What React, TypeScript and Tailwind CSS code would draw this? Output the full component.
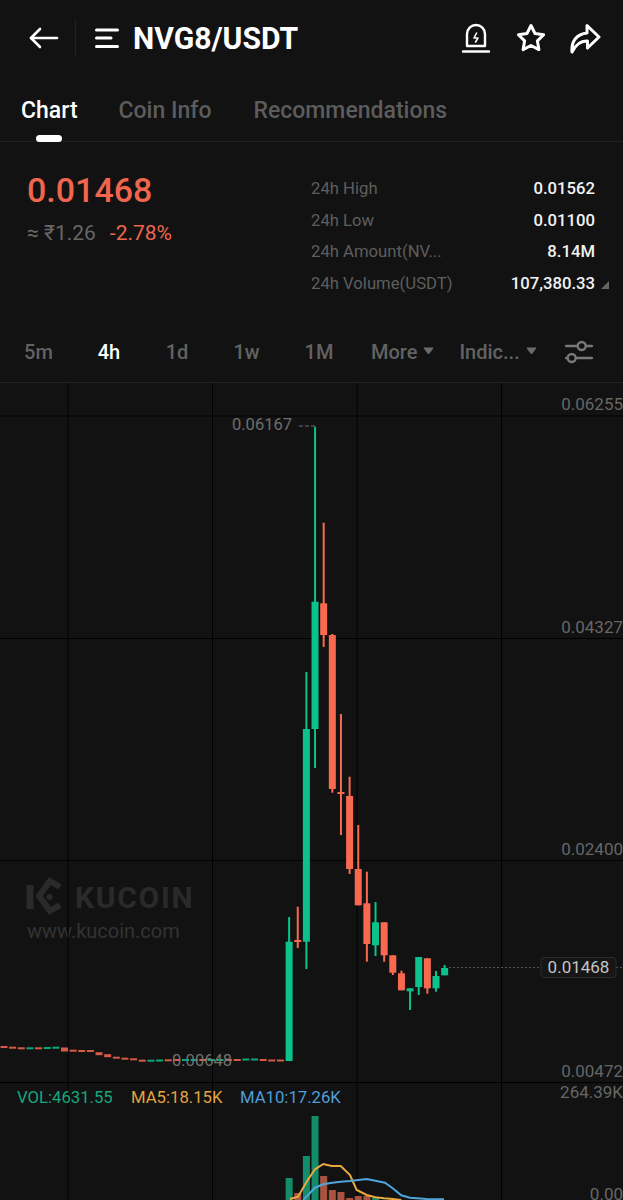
const UP = "#0cc28c";
const DOWN = "#f8694f";
const UP_VOL = "#128c69";
const DOWN_VOL = "#a9523f";
const xAt = (i: number) => 4 + 8.64 * i;

// Flat stretch of the market before the breakout: [index, y, rising, thickness]
const flat: [number, number, boolean, number][] = [
  [0, 1047, false, 2], [1, 1047.7, false, 2], [2, 1048.3, false, 2], [3, 1048.3, true, 2],
  [4, 1048.3, false, 2], [5, 1048, true, 2], [6, 1047.7, true, 2], [7, 1049.5, false, 4],
  [8, 1050.7, false, 2], [9, 1051, false, 2], [10, 1051, false, 2], [11, 1053.7, false, 3],
  [12, 1055.7, false, 3], [13, 1057.7, false, 2], [14, 1058.7, false, 2], [15, 1059.3, false, 2],
  [16, 1060.7, false, 2], [17, 1060.7, true, 2], [18, 1060.5, true, 2], [19, 1060.3, false, 2],
  [20, 1060, false, 2], [21, 1060, true, 2], [22, 1060, true, 2], [23, 1060, false, 2],
  [24, 1060, true, 2], [25, 1060, true, 2], [26, 1060, false, 2], [27, 1060, false, 2],
  [28, 1059.5, true, 2], [29, 1059.5, true, 2], [30, 1060, false, 2], [31, 1060.5, false, 2],
  [32, 1060.5, false, 2],
];

// Breakout candles: [index, bodyTop, bodyBottom, wickTop, wickBottom, rising]
const candles: [number, number, number, number, number, boolean][] = [
  [33, 941.7, 1061, 917, 1061, true],
  [34, 940, 942, 906.7, 948, false],
  [35, 729, 941.7, 672, 969, true],
  [36, 601.7, 729, 426.7, 768, true],
  [37, 603.3, 635, 522.7, 647, false],
  [38, 635, 789, 634, 792.7, false],
  [39, 792, 794, 714, 835, false],
  [40, 796, 869, 776.7, 874, false],
  [41, 869, 905.3, 825, 905.3, false],
  [42, 903.3, 944, 871.7, 961.7, false],
  [43, 922.3, 945.3, 902, 956, true],
  [44, 922.3, 955.3, 922.3, 961.7, false],
  [45, 955.3, 972.7, 955.3, 975, false],
  [46, 973.3, 990.3, 970.7, 990.3, false],
  [47, 988.3, 991.3, 988.3, 1010, true],
  [48, 957, 987, 957, 995, true],
  [49, 958.3, 988.3, 958.3, 993.7, false],
  [50, 976, 988.3, 971, 991.7, true],
  [51, 968, 975.3, 965, 975.3, true],
];

// Volume bars: [index, top, rising]
const volumes: [number, number, boolean][] = [
  [33, 1178, true], [34, 1193, false], [35, 1156, true], [36, 1116, true],
  [37, 1176, false], [38, 1190, false], [39, 1192, false], [40, 1198, false],
  [41, 1196, false], [42, 1196, false], [43, 1198, true],
];

const ma5 = "290,1199 298,1196.7 306.7,1181.7 315,1169.3 323.3,1164 331.7,1166 340.7,1166 350,1175 356.7,1190 366.7,1195 375.3,1197.3 384,1198.3 392.7,1199 401.3,1200";
const ma10 = "303.3,1200 315,1187.7 323.3,1184.3 332.3,1182.7 340.7,1181.7 350,1181 366.7,1179 375.3,1180.7 385,1182.7 392.7,1188.3 401.3,1195.3 410,1197.7 426.7,1199 444,1199.3";

function ChartCanvas() {
  return (
    <svg viewBox="0 383 623 817" className="block h-[817px] w-[623px]" style={{ fontFamily: "Roboto, sans-serif" }}>
      {/* watermark */}
      <g fill="none" stroke="#2a2a2a" strokeWidth="6">
        <path d="M30 885V909" strokeWidth="7" />
        <path d="M60 887L50 881L39 896L50 911L60 905" />
      </g>
      <circle cx="49.5" cy="897" r="3" fill="#2a2a2a" />
      <text x="75" y="908" fontSize="30" fontWeight="700" fill="#2a2a2a" letterSpacing="1.7">KUCOIN</text>
      <text x="27" y="938" fontSize="20" fill="#333333">www.kucoin.com</text>

      {/* grid */}
      <g stroke="#000000" strokeWidth="1">
        {[68, 212.5, 357, 501.5].map((x) => <line key={x} x1={x} x2={x} y1={383} y2={1200} />)}
        {[416, 638.5, 860.5, 1082.5].map((y) => <line key={y} x1={0} x2={623} y1={y} y2={y} />)}
      </g>

      {/* price candles */}
      {flat.map(([i, y, up, h]) => (
        <rect key={i} x={xAt(i) - 3.5} y={y - h / 2} width={7} height={h} fill={up ? UP : DOWN} opacity={0.85} />
      ))}
      {candles.map(([i, top, bottom, wickTop, wickBottom, up]) => (
        <g key={i} fill={up ? UP : DOWN}>
          <rect x={xAt(i) - 1} y={wickTop} width={2} height={wickBottom - wickTop} />
          <rect x={xAt(i) - 3.5} y={top} width={7} height={bottom - top} />
        </g>
      ))}

      {/* last price guide */}
      <line x1={449} x2={541} y1={967.5} y2={967.5} stroke="#555555" strokeDasharray="2 2" />
      <line x1={616} x2={623} y1={967.5} y2={967.5} stroke="#555555" strokeDasharray="2 2" />
      <rect x={541} y={957.5} width={75} height={20} rx={3} fill="#161616" stroke="#2b2b2b" />
      <text x={578.5} y={973} fontSize={17} fill="#c4c4c4" textAnchor="middle">0.01468</text>

      {/* extremes */}
      <text x={232} y={430} fontSize={16.5} fill="#6e6e6e">0.06167</text>
      <line x1={299} x2={315} y1={426} y2={426} stroke="#6e6e6e" strokeDasharray="4 2" />
      <text x={172} y={1066} fontSize={16.5} fill="#7d7d7d" fillOpacity={0.9}>0.00648</text>

      {/* price axis */}
      <g fontSize={17} fill="#666666" textAnchor="end">
        <text x={623} y={410}>0.06255</text>
        <text x={623} y={633}>0.04327</text>
        <text x={623} y={855}>0.02400</text>
        <text x={623} y={1077}>0.00472</text>
        <text x={623} y={1098}>264.39K</text>
        <text x={623} y={1200}>0.00</text>
      </g>

      {/* volume pane */}
      <g fontSize={16.7}>
        <text x={17} y={1103} fill="#17a67d">VOL:4631.55</text>
        <text x={131} y={1103} fill="#e3a440">MA5:18.15K</text>
        <text x={240} y={1103} fill="#4e9fd8">MA10:17.26K</text>
      </g>
      {volumes.map(([i, top, up]) => (
        <rect key={i} x={xAt(i) - 3.5} y={top} width={7} height={1200 - top} fill={up ? UP_VOL : DOWN_VOL} />
      ))}
      <polyline points={ma5} fill="none" stroke="#e9a93f" strokeWidth="2" />
      <polyline points={ma10} fill="none" stroke="#4ea6dc" strokeWidth="2" />
    </svg>
  );
}

function TopBar() {
  return (
    <div className="flex h-[76px] items-center">
      <svg width="30" height="24" viewBox="0 0 30 24" className="ml-[29px]" fill="none" stroke="#fff" strokeWidth="2.6" strokeLinecap="round" strokeLinejoin="round">
        <path d="M2 12H28" />
        <path d="M11 3L2 12L11 21" />
      </svg>
      <div className="ml-[16px] h-[36px] w-px bg-[#222222]" />
      <svg width="24" height="20" viewBox="0 0 24 20" className="ml-[19px]" fill="none" stroke="#fff" strokeWidth="3" strokeLinecap="round">
        <path d="M1.5 2H22.5" />
        <path d="M1.5 10H16" />
        <path d="M1.5 18.5H22.5" />
      </svg>
      <span className="ml-[14px] origin-left scale-x-[0.94] text-[32px] leading-none font-bold text-white">NVG8/USDT</span>
      <div className="ml-auto mr-[22px] flex items-center">
        <svg width="28" height="30" viewBox="0 0 28 30" fill="none" stroke="#fff" strokeWidth="2.4" strokeLinecap="round" strokeLinejoin="round">
          <path d="M5 23V11A9 9 0 0 1 23 11V23Z" />
          <path d="M1 28.5H27" strokeWidth="2.6" />
          <path d="M14.6 10L12 15H16L13.6 19" strokeWidth="1.6" />
        </svg>
        <svg width="30" height="30" viewBox="0 0 30 30" className="ml-[26px]" fill="none" stroke="#fff" strokeWidth="3" strokeLinejoin="round">
          <path d="M15 2.5L19 10.5L27.6 11.7L21.4 17.9L22.9 26.6L15 22.5L7.1 26.6L8.6 17.9L2.4 11.7L11 10.5Z" />
        </svg>
        <svg width="32" height="32" viewBox="0 0 32 32" className="ml-[23px]" fill="none" stroke="#fff" strokeWidth="3" strokeLinejoin="round">
          <path d="M3 30C2 19 8 12 18 11V3.5L30 15L18.5 26V19C11 18.5 6.5 23 3 30Z" />
        </svg>
      </div>
    </div>
  );
}

function Tabs() {
  return (
    <div className="relative flex h-[66px] border-b border-[#212121] pl-[21px] pt-[19px] text-[23px] leading-[32px] font-medium text-[#5c5c5c]">
      <span className="text-white">Chart</span>
      <span className="ml-[41px]">Coin Info</span>
      <span className="ml-[42px]">Recommendations</span>
      <div className="absolute bottom-[-1px] left-[36px] h-[7px] w-[26px] rounded-full bg-white" />
    </div>
  );
}

const stats = [
  { label: "24h High", value: "0.01562" },
  { label: "24h Low", value: "0.01100" },
  { label: "24h Amount(NV...", value: "8.14M" },
  { label: "24h Volume(USDT)", value: "107,380.33" },
];

function Summary() {
  return (
    <div className="flex h-[188px] pl-[27px] pr-[14px] pt-[30px]">
      <div className="w-[284px]">
        <div className="text-[34px] leading-[36px] font-medium text-[#f0654e]">0.01468</div>
        <div className="mt-[12px] flex text-[21px] leading-[26px] font-normal">
          <span className="text-[#666666]">≈ ₹1.26</span>
          <span className="ml-[14px] text-[#f0654e]">-2.78%</span>
        </div>
      </div>
      <div className="flex flex-1 flex-col gap-[5.5px] pt-[4px]">
        {stats.map((s, i) => (
          <div key={s.label} className="relative flex h-[26px] items-center justify-between pr-[14px] text-[16.7px]">
            <span className="text-[#5e5e5e]">{s.label}</span>
            <span className="font-medium text-[#f2f2f2]">{s.value}</span>
            {i === 3 && (
              <svg width="8" height="8" viewBox="0 0 8 8" className="absolute right-0 top-[10px]">
                <path d="M8 0V8H0Z" fill="#666666" />
              </svg>
            )}
          </div>
        ))}
      </div>
    </div>
  );
}

function Caret() {
  return (
    <svg width="11" height="8" viewBox="0 0 11 8">
      <path d="M1 1H10L5.5 7Z" fill="#6a6a6a" stroke="#6a6a6a" strokeLinejoin="round" />
    </svg>
  );
}

function Intervals() {
  return (
    <div className="flex h-[53px] items-start border-b border-[#222222] pl-[4px] text-[20px] leading-[44px] font-medium text-[#626262]">
      <span className="w-[69px] text-center">5m</span>
      <span className="w-[72px] text-center text-white">4h</span>
      <span className="w-[64px] text-center">1d</span>
      <span className="w-[75px] text-center">1w</span>
      <span className="w-[70px] text-center">1M</span>
      <span className="ml-[17px]">More</span>
      <span className="ml-[6px] mt-[17px]"><Caret /></span>
      <span className="ml-[25px]">Indic...</span>
      <span className="ml-[6px] mt-[17px]"><Caret /></span>
      <svg width="28" height="24" viewBox="0 0 28 24" className="ml-[28px] mt-[10px]" fill="none" stroke="#787878" strokeWidth="2.4" strokeLinecap="round">
        <path d="M1 6H12.5M21 6H27M1 18H2.5M11 18H27" />
        <circle cx="16.7" cy="6" r="4" />
        <circle cx="6.7" cy="18" r="4" />
      </svg>
    </div>
  );
}

export default function App() {
  return (
    <div className="h-[1200px] w-[623px] overflow-hidden bg-[#121212] font-['Roboto',sans-serif]">
      <TopBar />
      <Tabs />
      <Summary />
      <Intervals />
      <ChartCanvas />
    </div>
  );
}
